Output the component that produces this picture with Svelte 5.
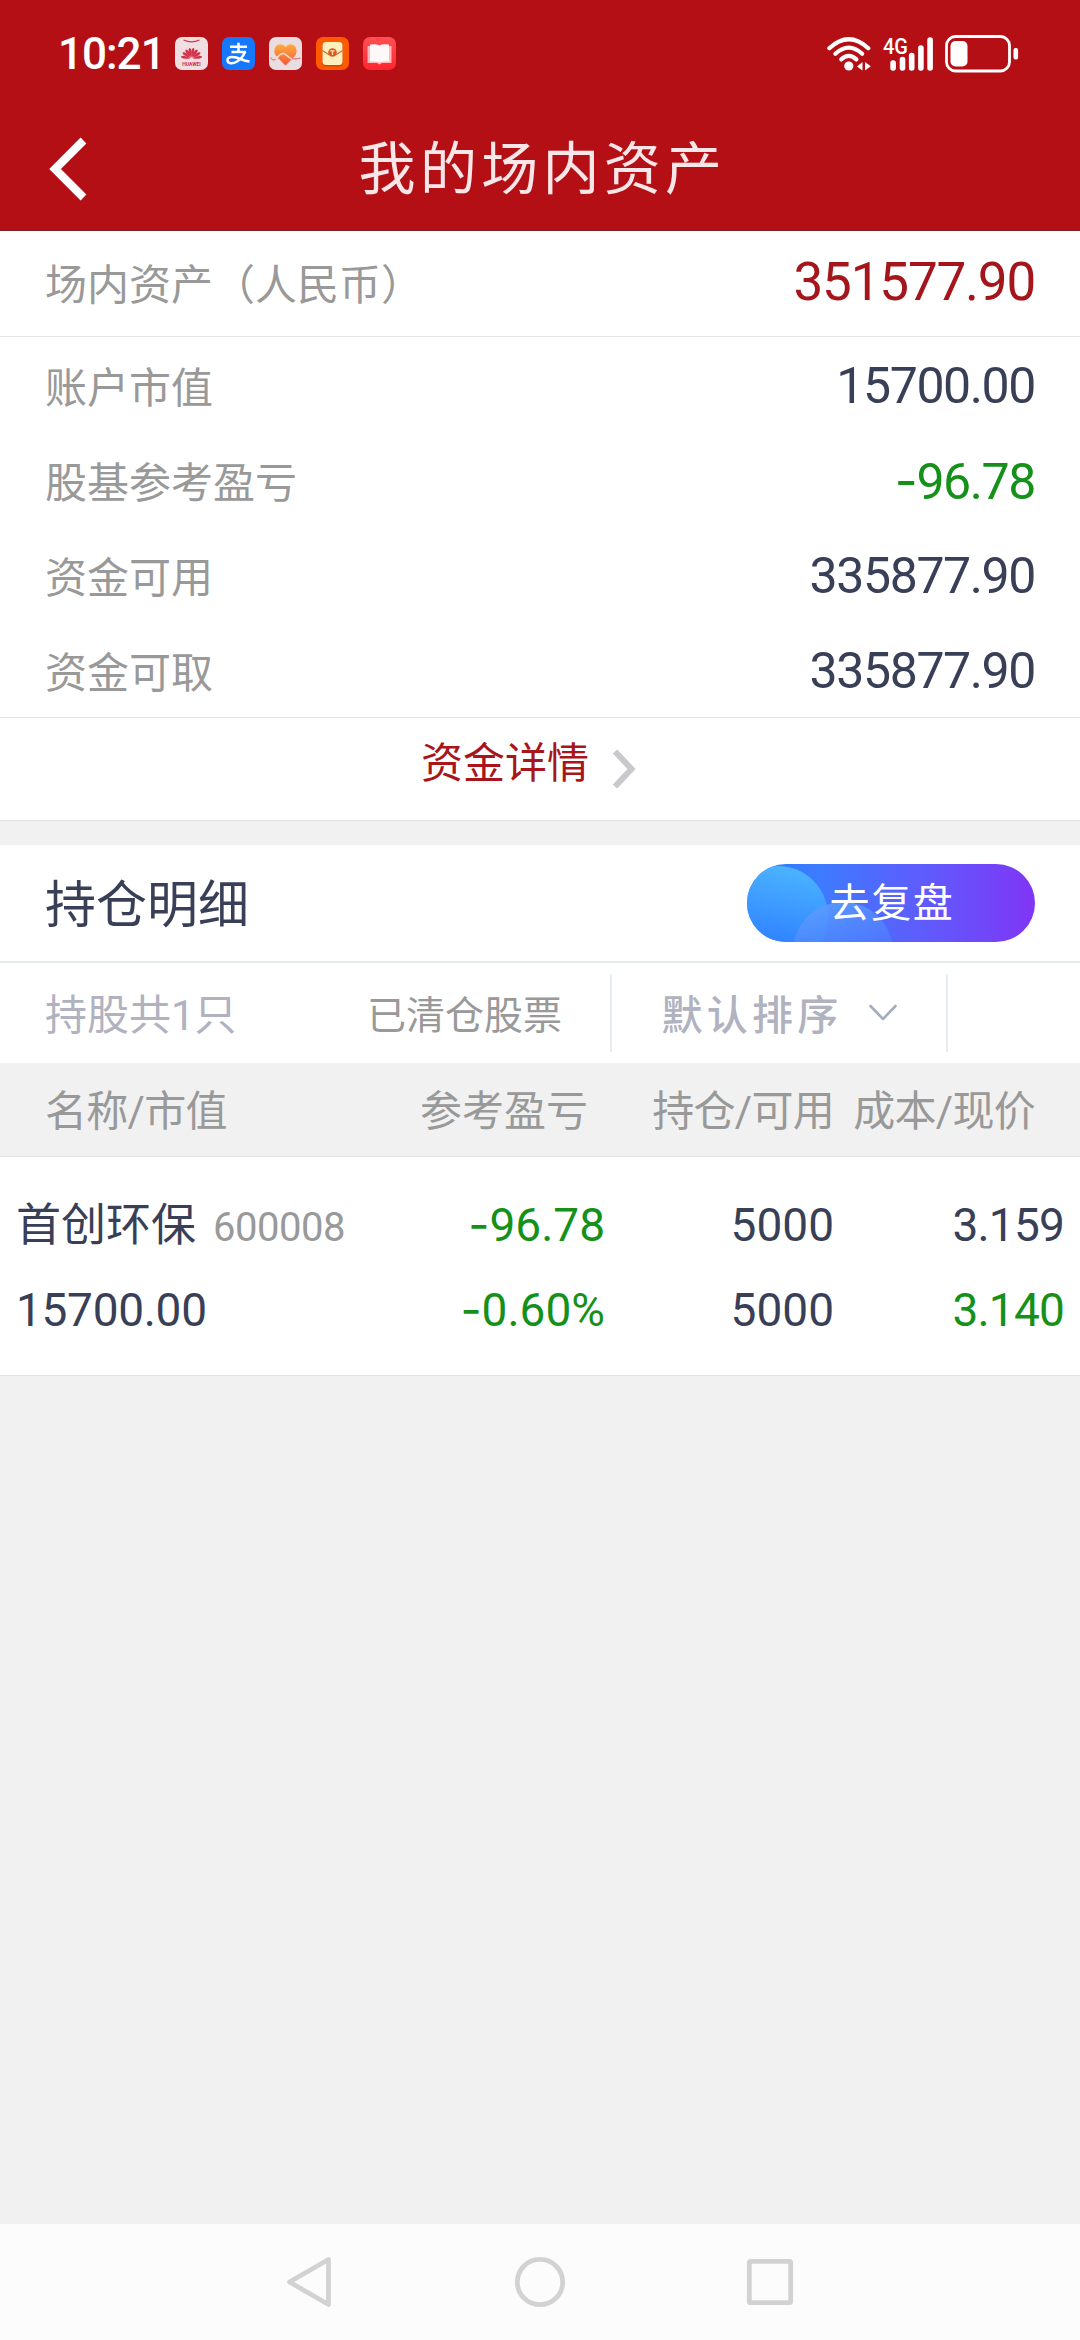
<script>
  const rows = [
    { label: '账户市值', value: '15700.00' },
    { label: '股基参考盈亏', sign: '-', value: '96.78', down: true },
    { label: '资金可用', value: '335877.90' },
    { label: '资金可取', value: '335877.90' },
  ];
  const bars = [
    { x: 0, h: 10.5 },
    { x: 9.4, h: 14 },
    { x: 18.6, h: 18 },
    { x: 27.8, h: 25.5 },
    { x: 37, h: 33.5 },
  ];
  const petals = [-80, -56, -33, -11, 11, 33, 56, 80];
</script>

<div class="screen">
  <header>
    <div class="status">
      <span class="time">10:21</span>
      <div class="apps">
        <svg viewBox="0 0 33 33">
          <rect width="33" height="33" rx="7" fill="#efdfe3" />
          <path d="M8.500 3q8 3.600 16 0" fill="none" stroke="#cf3c4d" stroke-width="1.200" />
          {#each petals as a}
            <path d="M16.500 20.500Q13.800 13.500 16 11q.500-.500 1 0Q19.200 13.500 16.500 20.500z" fill="#d2354b" transform="rotate({a} 16.500 21.500)" />
          {/each}
          <text x="16.500" y="28.600" text-anchor="middle" class="brand">HUAWEI</text>
        </svg>
        <svg viewBox="0 0 33 33">
          <rect width="33" height="33" rx="7" fill="#1677ff" />
          <path d="M8 9.800h17M16.500 5.800v9M9.500 15h13.500q-2.500 6-8 9.500c-4 2.500-9.500 2.500-9.500-1.300c0-4.500 8-3.500 13-1.200q5 2.200 9 2.500" fill="none" stroke="#fff" stroke-width="2.500" stroke-linejoin="round" />
        </svg>
        <svg viewBox="0 0 33 33">
          <defs>
            <linearGradient id="heart" x1="0" y1="0" x2="0" y2="1">
              <stop offset="0" stop-color="#ffad3e" />
              <stop offset="1" stop-color="#f4573b" />
            </linearGradient>
          </defs>
          <rect width="33" height="33" rx="7" fill="#eadde1" />
          <path d="M16.500 28.500L7.500 19.500C3.500 15 5.500 7.500 11 7.200q3.600 0 5.500 3q2-3 5.500-3c5.500.3 7.500 7.800 3.500 12.300z" fill="url(#heart)" />
          <path d="M6.500 22c3-2.500 4.500-6 8-5.500c3.500.8 4.500 4.500 8.500 5.500" fill="none" stroke="#fbdcd2" stroke-width="1.500" />
          <path d="M1.500 20.500q2.500 4 5 1.500M23 21.700q4 .8 8.500-.5" fill="none" stroke="#e2827a" stroke-width="1.300" />
        </svg>
        <svg viewBox="0 0 33 33">
          <rect width="33" height="33" rx="7" fill="#ff5a00" />
          <rect x="6" y="5.500" width="21" height="24" rx="4" fill="#d94600" />
          <rect x="6.500" y="5" width="20" height="23" rx="3.500" fill="#fff0bd" />
          <path d="M6.500 13.500l6 4h8l6-4" fill="none" stroke="#c96a34" stroke-width="1.200" />
          <circle cx="16.500" cy="15.500" r="4.300" fill="#e2581a" />
          <path d="M14.300 13.800h4.400M16.500 13.800v4.200" stroke="#ffe9b5" stroke-width="1.300" />
        </svg>
        <svg viewBox="0 0 33 33">
          <defs>
            <linearGradient id="book" x1="0" y1="0" x2="0" y2="1">
              <stop offset="0" stop-color="#ff5055" />
              <stop offset="1" stop-color="#ff262d" />
            </linearGradient>
          </defs>
          <rect width="33" height="33" rx="7" fill="url(#book)" />
          <path d="M4.500 9h24v17h-9.500l-2.500 1.500-2.500-1.500h-9.500z" fill="#ffb9bb" />
          <path d="M7 7.500q7-1 9.500 1q2.500-2 9.500-1v17q-7-.5-9.500 1q-2.500-1.500-9.500-1z" fill="#fff8f8" />
        </svg>
      </div>
      <div class="signals">
        <svg class="wifi" viewBox="0 0 44 34">
          <g fill="none" stroke="#fff" stroke-width="4.200" stroke-linecap="round">
            <path d="M2.300 11.200Q21.800-6.600 41.300 11.200" />
            <path d="M8.400 16.800Q21.800 4.400 35.200 16.800" />
            <path d="M14.200 22.400Q21.800 15.400 29.400 22.400" />
          </g>
          <circle cx="21.800" cy="29" r="4.600" fill="#fff" />
          <path d="M35.500 25v8.500l-5.500-4zM38 25l5.800 4.200L38 33.500z" fill="#fff" />
        </svg>
        <svg class="cell" viewBox="0 -8 50 50">
          <text x="0" y="16.600" textLength="25" lengthAdjust="spacingAndGlyphs">4G</text>
          {#each bars as b}
            <rect x={b.x + 7.3} y={33.7 - b.h} width="5.600" height={b.h} rx="2.700" fill="#fff" />
          {/each}
        </svg>
        <svg class="battery" viewBox="0 0 74 38">
          <rect x="1.500" y="1.500" width="63" height="34.500" rx="9" fill="none" stroke="#fff" stroke-width="2.800" />
          <rect x="5.500" y="6" width="17" height="25.500" rx="5" fill="#fff" />
          <rect x="68.500" y="13" width="4.600" height="11.500" rx="2" fill="#fff" />
        </svg>
      </div>
    </div>
    <div class="titlebar">
      <svg class="back" viewBox="0 0 40 64"><path d="M35.500 3.500L7 32l28.500 28.500" fill="none" stroke="#fff" stroke-width="8.200" /></svg>
      <h1>我的场内资产</h1>
    </div>
  </header>

  <section class="summary">
    <div class="row total">
      <span class="label">场内资产（人民币）</span>
      <span class="value">351577.90</span>
    </div>
    <div class="details">
      {#each rows as r}
        <div class="row">
          <span class="label">{r.label}</span>
          <span class="value" class:down={r.down}>{#if r.sign}<i>{r.sign}</i>{/if}{r.value}</span>
        </div>
      {/each}
    </div>
    <div class="more">
      <span>资金详情</span>
      <svg viewBox="0 0 24 40"><path d="M3 2.500L19.500 20L3 37.500" fill="none" stroke="#c8c8cd" stroke-width="6" /></svg>
    </div>
  </section>

  <section class="holdings">
    <div class="heading">
      <h2>持仓明细</h2>
      <button>
        <svg viewBox="0 0 288 78">
          <defs>
            <linearGradient id="pill" x1="0" x2="1"><stop offset="0" stop-color="#2b7bff" /><stop offset=".25" stop-color="#3d7bff" /><stop offset=".65" stop-color="#6258fc" /><stop offset="1" stop-color="#8035f6" /></linearGradient>
            <linearGradient id="bubble" x1=".6" y1="0" x2=".4" y2="1"><stop offset="0" stop-color="#4bb4ff" /><stop offset=".8" stop-color="#2f80ff" /></linearGradient>
            <linearGradient id="bubble2" x1=".4" y1="0" x2=".55" y2=".5"><stop offset="0" stop-color="#5a9bff" stop-opacity=".9" /><stop offset="1" stop-color="#4f80ff" stop-opacity=".6" /></linearGradient>
            <clipPath id="round"><rect width="288" height="78" rx="39" /></clipPath>
          </defs>
          <g clip-path="url(#round)">
            <rect width="288" height="78" fill="url(#pill)" />
            <circle cx="31" cy="52" r="50" fill="url(#bubble)" />
            <circle cx="96" cy="88" r="50" fill="url(#bubble2)" />
          </g>
        </svg>
        <span>去复盘</span>
      </button>
    </div>
    <div class="filters">
      <span class="count">持股共1只</span>
      <span class="cleared">已清仓股票</span>
      <div class="sort">
        <span>默认排序</span>
        <svg viewBox="0 0 28 18"><path d="M1.500 2L14 15L26.500 2" fill="none" stroke="#a4adbf" stroke-width="2.600" stroke-linecap="round" stroke-linejoin="round" /></svg>
      </div>
    </div>
    <div class="thead">
      <span>名称/市值</span><span>参考盈亏</span><span>持仓/可用</span><span>成本/现价</span>
    </div>
    <div class="stock">
      <div class="line">
        <span class="name">首创环保<small>600008</small></span>
        <span class="down"><i>-</i>96.78</span><span>5000</span><span class="price">3.159</span>
      </div>
      <div class="line">
        <span class="worth">15700.00</span>
        <span class="down"><i>-</i>0.60%</span><span>5000</span><span class="price down">3.140</span>
      </div>
    </div>
  </section>

  <nav>
    <svg viewBox="0 0 52 52"><path d="M44.500 3.500V48.500L5.500 26z" /></svg>
    <svg viewBox="0 0 52 52"><circle cx="26" cy="26" r="22.700" /></svg>
    <svg viewBox="0 0 52 52"><rect x="5.300" y="5.300" width="41.400" height="41.400" rx="1.500" /></svg>
  </nav>
</div>

<style>
  :global(body) {
    margin: 0;
    background: #f1f1f1;
  }
  .screen {
    width: 1080px;
    height: 2340px;
    display: flex;
    flex-direction: column;
    background: #f1f1f1;
    font-family: Roboto, 'Noto Sans CJK SC', sans-serif;
    font-size: 42px;
    line-height: 60px;
    color: #393f56;
    white-space: nowrap;
  }
  svg {
    display: block;
    flex: none;
  }
  i {
    font-family: Inter, sans-serif;
    font-style: normal;
  }
  header {
    height: 230px;
    background: #b40f15;
    border-bottom: 1px solid #7c2228;
    color: #fff;
  }
  .status {
    height: 107px;
    display: flex;
    align-items: center;
    padding: 0 61px 0 58px;
  }
  .time {
    width: 117px;
    padding-top: 1px;
    font-size: 44px;
    font-weight: 500;
    letter-spacing: -1px;
  }
  .apps {
    display: flex;
    gap: 14px;
  }
  .apps svg {
    width: 33px;
    height: 33px;
  }
  .brand {
    font-size: 5px;
    font-weight: 700;
    fill: #c9304a;
  }
  .signals {
    margin-left: auto;
    display: flex;
    align-items: center;
  }
  .wifi {
    width: 44px;
    height: 34px;
    margin-right: 12px;
  }
  .cell {
    width: 50px;
    height: 50px;
    margin-right: 12px;
  }
  .cell text {
    font-size: 22px;
    font-weight: 500;
    fill: #fff;
  }
  .battery {
    width: 74px;
    height: 38px;
  }
  .titlebar {
    height: 123px;
    display: grid;
    grid-template-columns: 134px 1fr 134px;
    align-items: center;
  }
  .back {
    width: 40px;
    height: 64px;
    margin-left: 48px;
  }
  h1 {
    margin: 3px 0 0 5px;
    font-size: 57px;
    font-weight: 400;
    letter-spacing: 4.3px;
    text-align: center;
    color: #f9e6e8;
  }
  .summary {
    background: #fff;
    border-bottom: 1px solid #e2e2e2;
  }
  .row {
    height: 95px;
    display: flex;
    align-items: center;
    justify-content: space-between;
    padding: 0 45px;
  }
  .label {
    color: #999;
    padding-top: 9px;
  }
  .value {
    font-size: 50px;
    letter-spacing: -1.4px;
    padding-top: 3px;
  }
  .total {
    height: 105px;
    border-bottom: 1px solid #e4e4e4;
  }
  .total .label {
    padding-top: 5px;
  }
  .total .value {
    font-size: 53px;
    letter-spacing: -1.2px;
    padding: 0 0 3px;
    color: #a4161c;
  }
  .down,
  .value.down {
    color: #15911a;
  }
  .more {
    height: 102px;
    border-top: 1px solid #e4e4e4;
    display: flex;
    justify-content: center;
    gap: 23px;
    color: #a8151b;
    padding-right: 23px;
    align-items: flex-start;
  }
  .more span {
    margin-top: 16px;
  }
  .more svg {
    width: 24px;
    height: 40px;
    margin-top: 31px;
  }
  .holdings {
    margin-top: 24px;
    background: #fff;
    border-bottom: 1px solid #e2e2e2;
  }
  .heading {
    height: 116px;
    display: flex;
    justify-content: space-between;
    align-items: center;
    padding: 0 45px;
    border-bottom: 2px solid #e6ecec;
  }
  h2 {
    margin: 6px 0 0;
    font-size: 51px;
    font-weight: 400;
  }
  button {
    display: grid;
    place-items: center;
    width: 288px;
    height: 78px;
    padding: 0;
    border: 0;
    background: none;
    font-family: inherit;
    font-size: 40px;
    line-height: 60px;
    letter-spacing: 1.6px;
    color: #fff;
  }
  button > * {
    grid-area: 1 / 1;
  }
  button span {
    padding: 2px 0 0 2px;
  }
  button svg {
    width: 288px;
    height: 78px;
  }
  .filters {
    height: 100px;
    display: grid;
    grid-template-columns: 322px 243px 1fr;
    align-items: center;
    padding-left: 45px;
    color: #b0b2bf;
  }
  .count,
  .cleared {
    padding-top: 5px;
  }
  .cleared {
    font-size: 39px;
    color: #999;
  }
  .sort {
    width: 334px;
    height: 78px;
    display: flex;
    align-items: center;
    gap: 26px;
    border: solid #e6ecf0;
    border-width: 0 2px;
    justify-content: center;
    font-size: 41px;
    font-weight: 500;
    letter-spacing: 4.3px;
  }
  .sort span {
    padding-top: 5px;
  }
  .sort svg {
    width: 28px;
    height: 18px;
  }
  .thead {
    height: 93px;
    display: grid;
    grid-template-columns: 1fr 248px 246px 201px;
    align-items: center;
    padding: 0 45px;
    background: #f1f1f1;
    border-bottom: 1px solid #e2e2e2;
    color: #999;
    letter-spacing: -0.7px;
  }
  .thead span:nth-child(2) {
    letter-spacing: 0;
  }
  .thead span:not(:first-child),
  .line > span:not(:first-child) {
    text-align: right;
  }
  .thead span {
    padding-top: 4px;
  }
  .stock {
    padding: 25px 16px 23px;
  }
  .line {
    height: 85px;
    display: grid;
    grid-template-columns: 1fr 205px 229px 230px;
    align-items: center;
    font-size: 46px;
  }
  .line .price {
    letter-spacing: -0.8px;
  }
  .line .worth {
    letter-spacing: -0.3px;
  }
  .name {
    padding-top: 5px;
    font-size: 45px;
  }
  small {
    margin-left: 17px;
    font-size: 40px;
    letter-spacing: -0.5px;
    color: #999;
  }
  nav {
    margin-top: auto;
    height: 116px;
    background: #fcfcfc;
    display: flex;
    justify-content: center;
    gap: 178px;
  }
  nav svg {
    width: 52px;
    height: 52px;
    margin-top: 32px;
    fill: none;
    stroke: #d2d2d2;
    stroke-width: 4.8;
    stroke-linejoin: round;
  }
</style>
